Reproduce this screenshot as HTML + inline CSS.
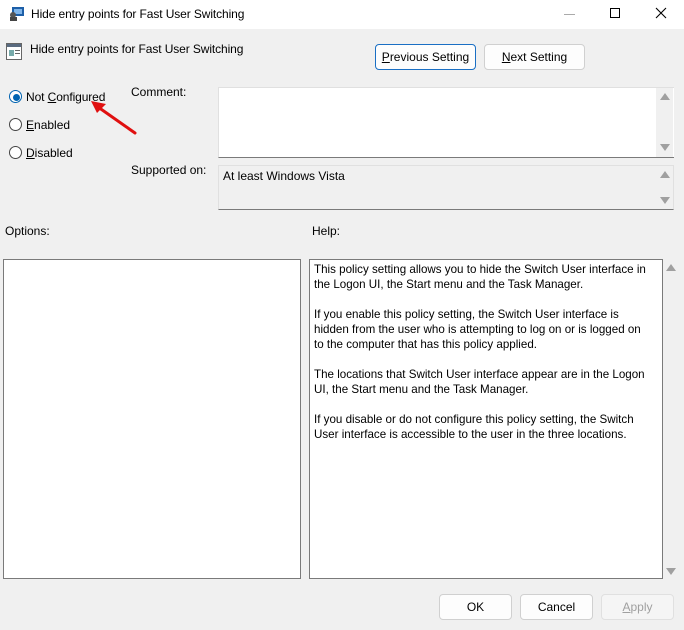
<!DOCTYPE html>
<html><head><meta charset="utf-8"><style>
*{margin:0;padding:0;box-sizing:border-box}
body{width:684px;height:630px;background:#f0f0f0;font-family:"Liberation Sans",sans-serif;font-size:12px;color:#000;position:relative;overflow:hidden}
.a{position:absolute;white-space:nowrap}
.btn{position:absolute;height:26px;border:1px solid #d0d0d0;border-radius:4px;background:#fdfdfd;text-align:center;line-height:24px;font-size:12px}
.box{position:absolute;border:1px solid #7a7a7a;background:#fff}
.tri{position:absolute;width:0;height:0;border-left:5px solid transparent;border-right:5px solid transparent}
.up{border-bottom:7px solid #a0a0a0}
.dn{border-top:7px solid #a0a0a0}
.rad{position:absolute;width:13px;height:13px;border:1px solid #444;border-radius:50%;background:#fff}
u{text-decoration:underline}
.n{letter-spacing:-0.1px}
</style></head><body>
<div class="a" style="left:0;top:0;width:684px;height:29px;background:#fff"></div>
<svg class="a" style="left:8px;top:6px" width="17" height="16"><rect x="4" y="1" width="12" height="9" fill="#1d5fa8"/><rect x="6" y="3" width="8" height="5" fill="#7fb4e8"/><circle cx="5" cy="9" r="3" fill="#555"/><rect x="2" y="11" width="7" height="4" fill="#444"/></svg>
<div class="a n" style="left:31px;top:7px;font-size:12px">Hide entry points for Fast User Switching</div>
<div class="a" style="left:564px;top:14px;width:11px;height:1px;background:#aaa"></div>
<div class="a" style="left:610px;top:8px;width:10px;height:10px;border:1px solid #000"></div>
<svg class="a" style="left:655px;top:7px" width="12" height="12"><path d="M1 1L11 11M11 1L1 11" stroke="#000" stroke-width="1.1"/></svg>

<svg class="a" style="left:6px;top:43px" width="16" height="17"><rect x="0.5" y="0.5" width="15" height="16" fill="#fff" stroke="#666"/><rect x="1" y="1" width="14" height="3" fill="#5a6b80"/><rect x="3" y="7" width="5" height="6" fill="#7aa"/><rect x="9" y="7" width="5" height="1" fill="#666"/><rect x="9" y="10" width="5" height="1" fill="#666"/></svg>
<div class="a n" style="left:30px;top:42px">Hide entry points for Fast User Switching</div>
<div class="btn" style="left:375px;top:44px;width:101px;border-color:#1a6fc4"><u>P</u>revious Setting</div>
<div class="btn" style="left:484px;top:44px;width:101px"><u>N</u>ext Setting</div>

<div class="rad" style="left:9px;top:90px;border-color:#0063b1"></div>
<div class="a" style="left:13px;top:94px;width:7px;height:7px;border-radius:50%;background:#0063b1"></div>
<div class="a n" style="left:26px;top:90px">Not <u>C</u>onfigured</div>
<div class="rad" style="left:9px;top:118px"></div>
<div class="a" style="left:26px;top:118px"><u>E</u>nabled</div>
<div class="rad" style="left:9px;top:146px"></div>
<div class="a" style="left:26px;top:146px"><u>D</u>isabled</div>
<svg class="a" style="left:88px;top:98px" width="52" height="40"><path d="M47 35L10 9" stroke="#e01010" stroke-width="3" stroke-linecap="round"/><path d="M3 3L18 6L9 15Z" fill="#e01010"/></svg>

<div class="a" style="left:131px;top:85px">Comment:</div>
<div class="a" style="left:131px;top:163px">Supported on:</div>
<div class="a" style="left:218px;top:87px;width:456px;height:71px;background:#fff;border-bottom:1px solid #7a7a7a;border-left:1px solid #e0e0e0;border-top:1px solid #e0e0e0"></div>
<div class="a" style="left:656px;top:88px;width:17px;height:69px;background:#f0f0f0"></div>
<div class="tri up" style="left:660px;top:93px"></div>
<div class="tri dn" style="left:660px;top:144px"></div>
<div class="a" style="left:218px;top:165px;width:456px;height:45px;border:1px solid #e0e0e0;border-bottom:1px solid #7a7a7a;background:#f0f0f0"></div>
<div class="tri up" style="left:660px;top:171px"></div>
<div class="tri dn" style="left:660px;top:197px"></div>
<div class="a" style="left:223px;top:169px">At least Windows Vista</div>

<div class="a" style="left:5px;top:224px">Options:</div>
<div class="a" style="left:312px;top:224px">Help:</div>
<div class="box" style="left:3px;top:259px;width:298px;height:320px"></div>
<div class="box" style="left:309px;top:259px;width:354px;height:320px"></div>
<div class="tri up" style="left:666px;top:264px"></div>
<div class="tri dn" style="left:666px;top:568px"></div>
<div class="a" style="left:314px;top:262px;line-height:15px;font-size:11.6px">
This policy setting allows you to hide the Switch User interface in<br>the Logon UI, the Start menu and the Task Manager.<br><br>If you enable this policy setting, the Switch User interface is<br>hidden from the user who is attempting to log on or is logged on<br>to the computer that has this policy applied.<br><br>The locations that Switch User interface appear are in the Logon<br>UI, the Start menu and the Task Manager.<br><br>If you disable or do not configure this policy setting, the Switch<br>User interface is accessible to the user in the three locations.</div>

<div class="btn" style="left:439px;top:594px;width:73px">OK</div>
<div class="btn" style="left:520px;top:594px;width:73px">Cancel</div>
<div class="btn" style="left:601px;top:594px;width:73px;color:#a0a0a0;background:#f5f5f5;border-color:#e0e0e0"><u>A</u>pply</div>
</body></html>
